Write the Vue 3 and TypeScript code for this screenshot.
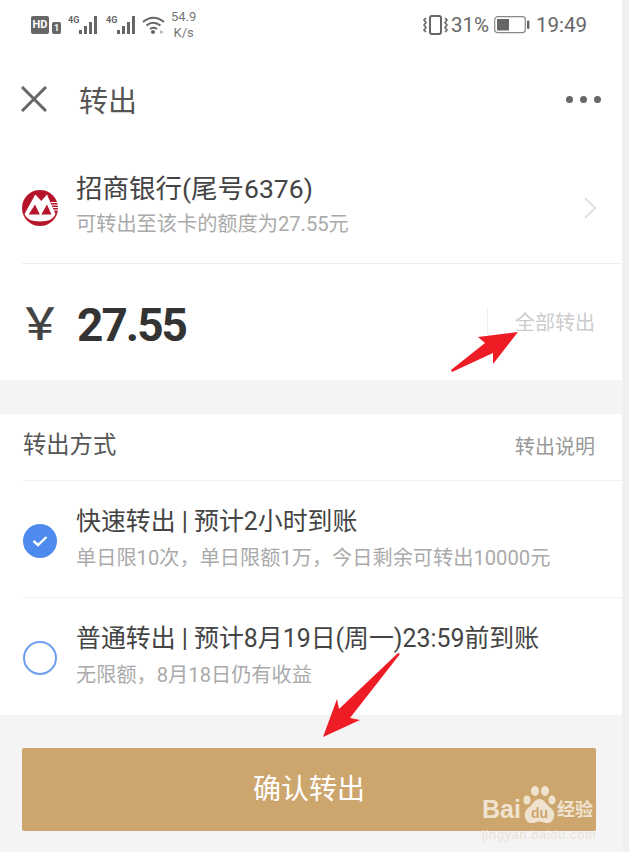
<script setup lang="ts">
const signals = [0, 1]
</script>

<template>
  <div class="page">
    <div class="main">
      <div class="status">
        <div class="status-left">
          <span class="hd">HD</span>
          <span class="sim">1</span>
          <svg v-for="s in signals" :key="s" class="signal" width="32" height="20" viewBox="0 0 32 20">
            <text x="0" y="8" class="four-g">4G</text>
            <rect x="11" y="15" width="3" height="4" />
            <rect x="16" y="11" width="3" height="8" />
            <rect x="21" y="7" width="3" height="12" />
            <rect x="26" y="1" width="3" height="18" />
          </svg>
          <svg class="wifi" width="23" height="20" viewBox="0 0 23 20" fill="none" stroke="#666" stroke-width="2">
            <path d="M1 7 Q11 -1.500 22 7" />
            <path d="M4.500 10.500 Q11 5 18.500 10.500" />
            <path d="M8 14 Q11 11.500 15 14" />
            <circle cx="11" cy="17" r="2" fill="#666" stroke="none" />
            <path d="M18 15 L22 17 L18 19 Z" fill="#bbb" stroke="none" />
          </svg>
          <div class="speed"><span>54.9</span><span>K/s</span></div>
        </div>
        <div class="status-right">
          <svg width="25" height="20" viewBox="0 0 25 20" fill="none" stroke="#666">
            <rect x="7" y="1" width="11" height="18" rx="2" stroke-width="2" />
            <path d="M3 3 L1 5 L3 7.500 L1 10 L3 12.500 L1 15 L3 17" stroke-width="1.600" />
            <path d="M22 3 L24 5 L22 7.500 L24 10 L22 12.500 L24 15 L22 17" stroke-width="1.600" />
          </svg>
          <span class="pct">31%</span>
          <svg width="36" height="18" viewBox="0 0 36 18">
            <rect x="0.700" y="0.700" width="30.600" height="16" rx="3" fill="none" stroke="#888" stroke-width="1.200" />
            <rect x="3" y="3" width="12" height="11.500" fill="#666" />
            <rect x="33" y="4.500" width="2.400" height="8.500" rx="1" fill="#666" />
          </svg>
          <span class="clock">19:49</span>
        </div>
      </div>

      <header class="nav">
        <svg width="26" height="26" viewBox="0 0 26 26" stroke="#666" stroke-width="3" fill="none">
          <path d="M1 1 L25 25 M25 1 L1 25" />
        </svg>
        <span class="nav-title">转出</span>
        <div class="dots"><i></i><i></i><i></i></div>
      </header>

      <section class="card top-card">
        <div class="bank">
          <svg class="logo" width="36" height="36" viewBox="0 0 36 36">
            <circle cx="18" cy="18" r="18" fill="#b5152b" />
            <path d="M2.500 24 L13.300 4.500 L19.300 11 L25 4.500 L33.500 24 Q31 31.500 18 31.500 Q5 31.500 2.500 24 Z" fill="#fff" />
            <path d="M6.700 24.500 L13 14.500 L17.800 24.500 Z M19.300 24.500 L25 14.500 L29.500 24.500 Z" fill="#b5152b" />
            <path d="M29 12.500 H36 M30 15 H36 M31 17.500 H36 M32 20 H36" stroke="#fff" stroke-width="1" />
          </svg>
          <div class="bank-text">
            <div class="bank-name">招商银行(尾号6376)</div>
            <div class="muted bank-sub">可转出至该卡的额度为27.55元</div>
          </div>
          <svg class="chevron" width="12" height="22" viewBox="0 0 12 22" fill="none" stroke="#ddd" stroke-width="1.600">
            <path d="M1 1 L11 11 L1 21" />
          </svg>
        </div>
        <div class="amount">
          <span class="yen">￥</span>
          <span class="value">27.55</span>
          <span class="sep"></span>
          <span class="all">全部转出</span>
        </div>
      </section>

      <section class="card methods">
        <div class="methods-head">
          <span class="methods-title">转出方式</span>
          <span class="methods-link">转出说明</span>
        </div>
        <div class="option">
          <span class="radio checked">
            <svg width="16" height="12" viewBox="0 0 16 12" fill="none" stroke="#fff" stroke-width="2.400">
              <path d="M1.500 6 L6 10 L14.500 2" />
            </svg>
          </span>
          <div>
            <div class="opt-title">快速转出 | 预计2小时到账</div>
            <div class="muted opt-sub">单日限10次，单日限额1万，今日剩余可转出10000元</div>
          </div>
        </div>
        <div class="option">
          <span class="radio"></span>
          <div>
            <div class="opt-title">普通转出 | 预计8月19日(周一)23:59前到账</div>
            <div class="muted opt-sub">无限额，8月18日仍有收益</div>
          </div>
        </div>
      </section>

      <div class="action">
        <button class="confirm" type="button">确认转出</button>
      </div>
    </div>

    <svg class="arrows" width="629" height="852" viewBox="0 0 629 852">
      <polygon fill="#ee1c25" points="518,332 478,337 485,343 451,370 452,372 493,353 493,364" />
      <polygon fill="#ee1c25" points="323,737 337,699 339,709 398,653 400,654 350,718 360,720" />
    </svg>

    <div class="watermark">
      <div class="wm-top">
        <span class="wm-bai">Bai</span>
        <svg class="paw" width="34" height="42" viewBox="0 0 34 42" fill="#efe3d0">
          <ellipse cx="5" cy="17" rx="3.600" ry="4.600" />
          <ellipse cx="13" cy="8" rx="4" ry="5" />
          <ellipse cx="23" cy="8" rx="4" ry="5" />
          <ellipse cx="30" cy="17" rx="3.600" ry="4.600" />
          <path d="M17.500 16 C23 16 24 22 29 25 C35 30 32 40 25 40 C21 40 20 38.500 17.500 38.500 C15 38.500 14 40 10 40 C3 40 0 30 6 25 C11 22 12 16 17.500 16 Z" />
          <text x="17.500" y="35" class="wm-du">du</text>
        </svg>
        <span class="wm-jy">经验</span>
      </div>
      <div class="wm-url">jingyan.baidu.com</div>
    </div>
  </div>
</template>

<style scoped>
.page {
  position: relative;
  width: 629px;
  height: 852px;
  overflow: hidden;
  background: #f0f0f0;
  font-family: Roboto, "Noto Sans CJK SC", sans-serif;
}
.main {
  width: 622px;
  height: 852px;
  background: #f4f4f4;
  display: flex;
  flex-direction: column;
}
.status {
  height: 48px;
  box-sizing: border-box;
  padding: 2px 35px 0 31px;
  background: #fff;
  display: flex;
  justify-content: space-between;
  align-items: center;
  color: #666;
}
.status-left, .status-right { display: flex; align-items: center; }
.hd {
  width: 18px;
  height: 18px;
  background: #666;
  color: #fff;
  border-radius: 2px;
  font: 700 11px/18px Roboto, sans-serif;
  text-align: center;
}
.sim {
  width: 9px;
  height: 12px;
  margin: 5px 0 0 3px;
  background: #666;
  color: #fff;
  border-radius: 2px;
  font: 700 9px/12px Roboto, sans-serif;
  text-align: center;
}
.signal { margin-left: 7px; fill: #666; }
.signal + .signal { margin-left: 6px; }
.four-g { font: 700 9px Roboto, sans-serif; fill: #666; }
.wifi { margin-left: 4px; }
.speed {
  display: flex;
  flex-direction: column;
  align-items: center;
  margin-left: 6px;
  font-size: 13px;
  line-height: 16px;
  color: #777;
}
.status-right svg { flex: none; }
.pct { margin: 0 5px 0 3px; font-size: 20.500px; }
.clock { margin-left: 6px; font-size: 20.500px; }

.nav {
  height: 104px;
  box-sizing: border-box;
  padding: 0 21px 2px 21px;
  background: #fff;
  display: flex;
  align-items: center;
}
.nav-title {
  margin-left: 32px;
  font-size: 29px;
  color: #555;
}
.dots { margin-left: auto; display: flex; gap: 7px; }
.dots i { width: 7px; height: 7px; border-radius: 50%; background: #666; }

.card { background: #fff; }
.top-card { height: 228px; }
.bank {
  height: 112px;
  box-sizing: border-box;
  margin-left: 22px;
  padding-right: 26px;
  border-bottom: 1px solid #eee;
  display: flex;
  align-items: center;
}
.logo { flex: none; }
.bank-text { margin: 0 0 5px 18px; }
.bank-name { font-size: 26.500px; line-height: 38px; color: #444; }
.bank-sub { line-height: 32px; }
.muted { font-size: 20.200px; color: #aaa; }
.chevron { margin-left: auto; }
.amount {
  height: 116px;
  box-sizing: border-box;
  margin-left: 22px;
  padding: 6px 27px 0 0;
  display: flex;
  align-items: center;
}
.yen {
  flex: none;
  width: 59px;
  margin: 0 0 8px -4px;
  font-family: "Noto Sans CJK SC", sans-serif;
  font-size: 44px;
  font-weight: 500;
  line-height: 50px;
  color: #444;
}
.value { font-size: 46px; font-weight: 700; letter-spacing: -2px; color: #333; }
.sep { margin: 0 0 8px auto; width: 1px; height: 26px; background: #eee; }
.all { margin: 0 0 8px 27px; font-size: 20px; color: #ccc; }

.methods { margin-top: 34px; height: 301px; padding-left: 23px; }
.methods-head {
  height: 66px;
  box-sizing: border-box;
  padding: 0 27px 6px 0;
  display: flex;
  justify-content: space-between;
  align-items: center;
}
.methods-title { margin-bottom: 2px; font-size: 23.300px; color: #555; }
.methods-link { margin-top: 2px; font-size: 20px; color: #999; }
.option {
  height: 117px;
  box-sizing: border-box;
  display: flex;
  align-items: center;
  gap: 19px;
  border-top: 1px solid #eef0f2;
}
.radio {
  flex: none;
  width: 34px;
  height: 34px;
  box-sizing: border-box;
  border: 2px solid #6f9fec;
  border-radius: 50%;
  display: flex;
  align-items: center;
  justify-content: center;
  margin-top: 3px;
}
.radio.checked { background: #4d8cee; border-color: #4d8cee; }
.opt-title { padding-top: 1px; font-size: 24.900px; line-height: 36px; color: #444; }
.opt-sub { margin-top: 1px; line-height: 34px; }

.action { flex: 1; padding: 33px 26px 0 22px; }
.confirm {
  display: block;
  width: 100%;
  height: 83px;
  padding: 0 0 6px;
  border: none;
  border-radius: 2px;
  background: #cda66d;
  color: #fff;
  font-family: inherit;
  font-size: 28px;
}

.arrows { position: absolute; left: 0; top: 0; pointer-events: none; }
.watermark {
  position: absolute;
  left: 482px;
  top: 783px;
  width: 116px;
  color: #efe3d0;
}
.wm-top { display: flex; align-items: flex-end; height: 42px; }
.wm-bai { font: 700 25px/28px "Liberation Sans", sans-serif; margin-bottom: 2px; }
.paw { margin: 0 1px; flex: none; }
.wm-du { font: 700 14px "Liberation Sans", sans-serif; fill: #cda66d; text-anchor: middle; }
.wm-jy { font-size: 18px; line-height: 28px; font-weight: 700; margin-bottom: 1px; white-space: nowrap; }
.wm-url { font: 12.500px/16px "Liberation Sans", sans-serif; letter-spacing: 0.800px; margin-top: 2px; white-space: nowrap; color: #e9e2d6; }
</style>
